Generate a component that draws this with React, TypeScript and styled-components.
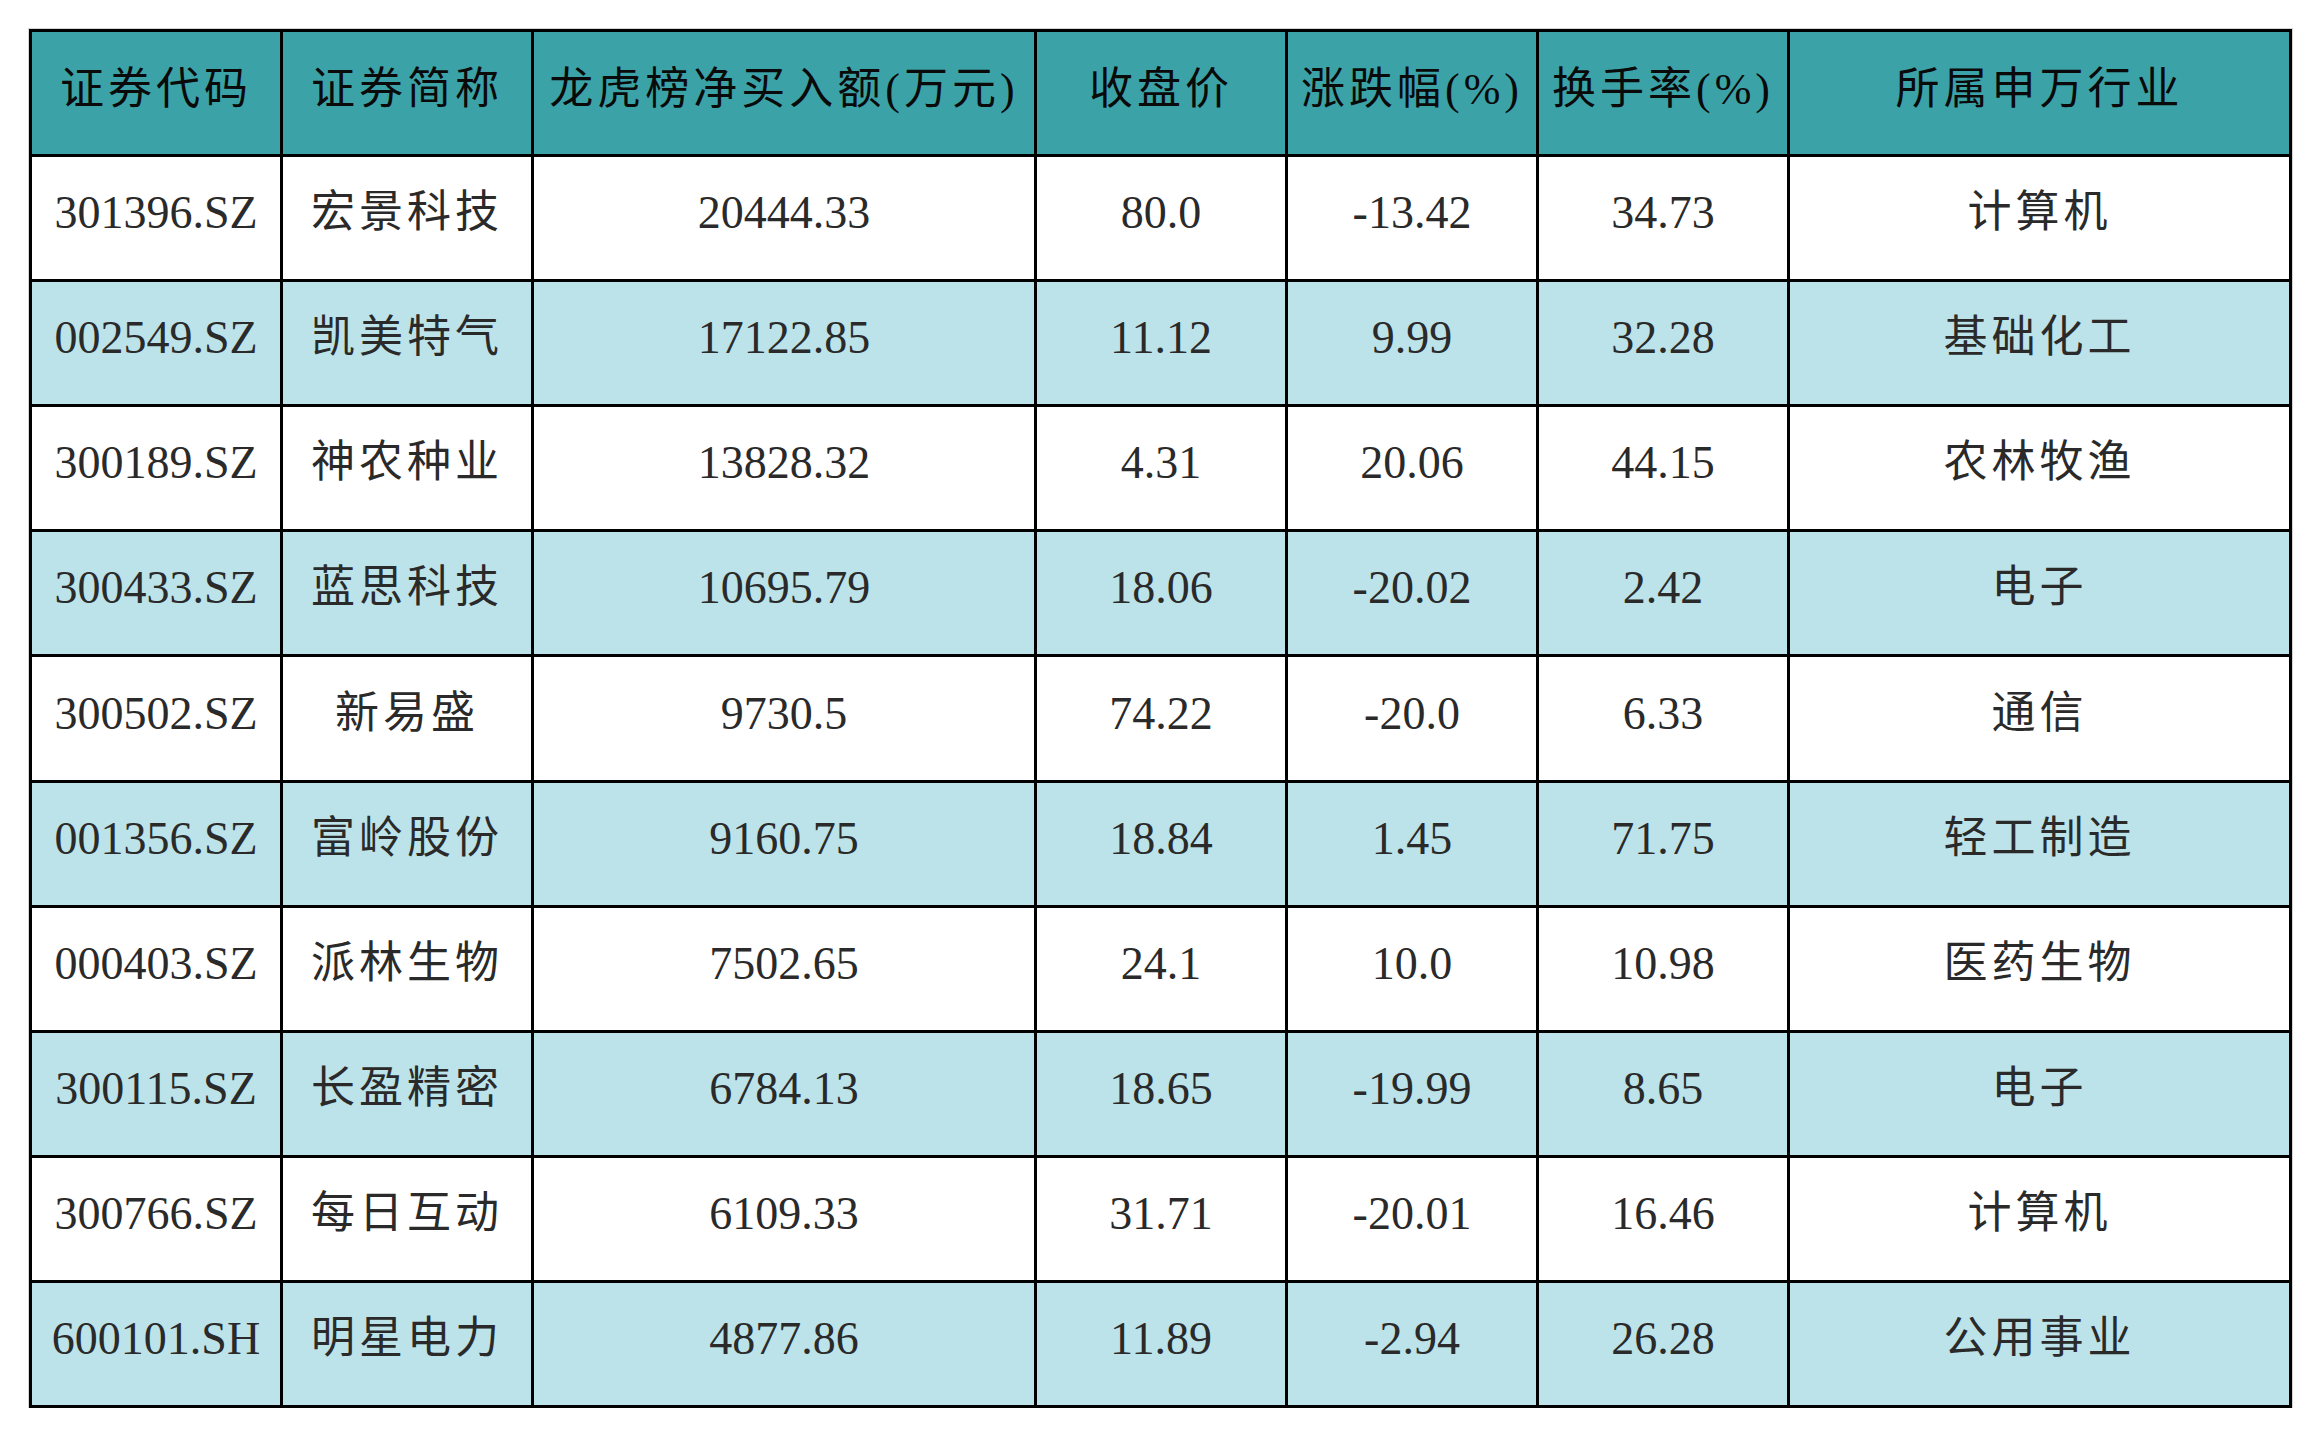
import React from 'react';
import styled, { createGlobalStyle } from 'styled-components';

interface Stock {
  code: string
  name: string
  netBuy: string
  close: string
  change: string
  turnover: string
  industry: string
}

const headers = [
  '证券代码',
  '证券简称',
  '龙虎榜净买入额(万元)',
  '收盘价',
  '涨跌幅(%)',
  '换手率(%)',
  '所属申万行业',
]

const rows: Stock[] = [
  { code: '301396.SZ', name: '宏景科技', netBuy: '20444.33', close: '80.0', change: '-13.42', turnover: '34.73', industry: '计算机' },
  { code: '002549.SZ', name: '凯美特气', netBuy: '17122.85', close: '11.12', change: '9.99', turnover: '32.28', industry: '基础化工' },
  { code: '300189.SZ', name: '神农种业', netBuy: '13828.32', close: '4.31', change: '20.06', turnover: '44.15', industry: '农林牧渔' },
  { code: '300433.SZ', name: '蓝思科技', netBuy: '10695.79', close: '18.06', change: '-20.02', turnover: '2.42', industry: '电子' },
  { code: '300502.SZ', name: '新易盛', netBuy: '9730.5', close: '74.22', change: '-20.0', turnover: '6.33', industry: '通信' },
  { code: '001356.SZ', name: '富岭股份', netBuy: '9160.75', close: '18.84', change: '1.45', turnover: '71.75', industry: '轻工制造' },
  { code: '000403.SZ', name: '派林生物', netBuy: '7502.65', close: '24.1', change: '10.0', turnover: '10.98', industry: '医药生物' },
  { code: '300115.SZ', name: '长盈精密', netBuy: '6784.13', close: '18.65', change: '-19.99', turnover: '8.65', industry: '电子' },
  { code: '300766.SZ', name: '每日互动', netBuy: '6109.33', close: '31.71', change: '-20.01', turnover: '16.46', industry: '计算机' },
  { code: '600101.SH', name: '明星电力', netBuy: '4877.86', close: '11.89', change: '-2.94', turnover: '26.28', industry: '公用事业' },
]

const GlobalStyle = createGlobalStyle`
  html, body {
    margin: 0;
    padding: 0;
    background: #ffffff;
  }
`

const App = () => {
  return (
    <>
      <GlobalStyle />
      <Page>
        <Sheet>
          {headers.map((h) => (
            <HeadCell key={h}>{h}</HeadCell>
          ))}
          {rows.map((r, i) => {
            const shaded = i % 2 === 1
            return (
              <React.Fragment key={r.code}>
                <Cell $shaded={shaded}>{r.code}</Cell>
                <Cell $shaded={shaded} $cjk>{r.name}</Cell>
                <Cell $shaded={shaded}>{r.netBuy}</Cell>
                <Cell $shaded={shaded}>{r.close}</Cell>
                <Cell $shaded={shaded}>{r.change}</Cell>
                <Cell $shaded={shaded}>{r.turnover}</Cell>
                <Cell $shaded={shaded} $cjk>{r.industry}</Cell>
              </React.Fragment>
            )
          })}
        </Sheet>
      </Page>
    </>
  )
}

export default App;

const Page = styled.div`
  padding: 29px 0 0 29px;
`

const Sheet = styled.div`
  display: grid;
  width: max-content;
  grid-template-columns: 248px 248px 500px 248px 248px 248px 499px;
  grid-auto-rows: 122.1px;
  gap: 3px;
  padding: 3px;
  background: #000000;
  box-shadow: 0 0 0 1px #d4d4d4;
`

const HeadCell = styled.div`
  display: flex;
  align-items: center;
  justify-content: center;
  padding-bottom: 7px;
  box-sizing: border-box;
  background: #3ba3a7;
  color: #0a0a0a;
  font-family: "Liberation Serif", "Noto Sans CJK SC", serif;
  font-size: 44px;
  letter-spacing: 4px;
  line-height: 1;
  white-space: nowrap;
`

const Cell = styled.div<{ $shaded: boolean; $cjk?: boolean }>`
  display: flex;
  align-items: center;
  justify-content: center;
  padding-bottom: 10px;
  box-sizing: border-box;
  background: ${({ $shaded }) => ($shaded ? '#bce3e9' : '#ffffff')};
  color: #2a2a2a;
  font-family: "Liberation Serif", "Noto Sans CJK SC", serif;
  font-size: ${({ $cjk }) => ($cjk ? '44px' : '46px')};
  letter-spacing: ${({ $cjk }) => ($cjk ? '4px' : '0')};
  line-height: 1;
  white-space: nowrap;
`
